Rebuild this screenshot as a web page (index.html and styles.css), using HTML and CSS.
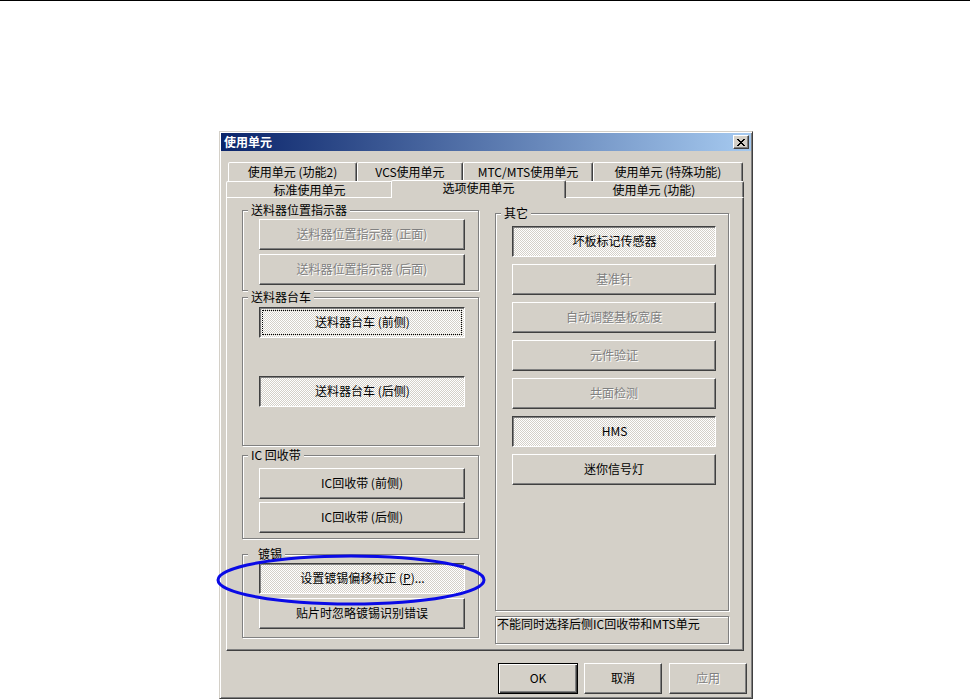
FILE: index.html
```html
<!DOCTYPE html>
<html lang="zh-CN">
<head>
<meta charset="utf-8">
<title>使用单元</title>
<link rel="stylesheet" href="styles.css">
</head>
<body>
<div class="topline"></div>
<div class="dialog">
  <div class="titlebar">
    <span class="title">使用单元</span>
    <span class="close"><svg width="8" height="7" viewBox="0 0 8 7"><path d="M0 0h2v1H0zM6 0h2v1H6zM1 1h2v1H1zM5 1h2v1H5zM2 2h4v1H2zM3 3h2v1H3zM2 4h4v1H2zM1 5h2v1H1zM5 5h2v1H5zM0 6h2v1H0zM6 6h2v1H6z" fill="#000"/></svg></span>
  </div>
  <div class="client">
    <div class="tabrow row1">
      <div class="tab t11">使用单元 (功能2)</div>
      <div class="tab t12">VCS使用单元</div>
      <div class="tab t13">MTC/MTS使用单元</div>
      <div class="tab t14">使用单元 (特殊功能)</div>
    </div>
    <div class="tabrow row2">
      <div class="tab t21">标准使用单元</div>
      <div class="tab t22 sel">选项使用单元</div>
      <div class="tab t23">使用单元 (功能)</div>
    </div>
    <div class="panel">
      <div class="col-left">
        <div class="group g1">
          <span class="legend">送料器位置指示器</span>
          <div class="btn dis">送料器位置指示器 (正面)</div>
          <div class="btn dis">送料器位置指示器 (后面)</div>
        </div>
        <div class="group g2">
          <span class="legend">送料器台车</span>
          <div class="btn on focus">送料器台车 (前侧)</div>
          <div class="btn on">送料器台车 (后侧)</div>
        </div>
        <div class="group g3">
          <span class="legend">IC 回收带</span>
          <div class="btn">IC回收带 (前侧)</div>
          <div class="btn">IC回收带 (后侧)</div>
        </div>
        <div class="group g4">
          <span class="legend wide">镀锡</span>
          <div class="btn on">设置镀锡偏移校正 (<u>P</u>)...</div>
          <div class="btn">贴片时忽略镀锡识别错误</div>
        </div>
      </div>
      <div class="col-right">
        <div class="group gr">
          <span class="legend">其它</span>
          <div class="btn on">坏板标记传感器</div>
          <div class="btn dis">基准针</div>
          <div class="btn dis">自动调整基板宽度</div>
          <div class="btn dis">元件验证</div>
          <div class="btn dis">共面检测</div>
          <div class="btn on">HMS</div>
          <div class="btn">迷你信号灯</div>
        </div>
        <div class="status">不能同时选择后侧IC回收带和MTS单元</div>
      </div>
    </div>
    <div class="footer">
      <div class="btn def">OK</div>
      <div class="btn cancel">取消</div>
      <div class="btn dis">应用</div>
    </div>
  </div>
</div>
<svg class="mark" width="272" height="56" viewBox="0 0 272 56"><ellipse cx="136" cy="28" rx="133" ry="24" fill="none" stroke="#0a0ae6" stroke-width="3"/></svg>
</body>
</html>
```

FILE: styles.css
```css
* { box-sizing: border-box; }
html, body { margin: 0; padding: 0; background: #fff; }
body {
  font-family: "Noto Sans CJK SC", "Noto Sans", sans-serif;
  font-size: 12px;
  color: #000;
  position: relative;
  height: 699px;
  overflow: hidden;
}
.topline { height: 1px; background: #000; }

.dialog {
  margin: 130px 0 0 219px;
  width: 534px;
  height: 568px;
  background: #d4d0c8;
  border: 1px solid;
  border-color: #d4d0c8 #404040 #404040 #d4d0c8;
  box-shadow: inset 1px 1px #fff, inset -1px -1px #808080;
  padding: 1px;
}
.titlebar {
  height: 18px;
  background: linear-gradient(to right, #0a246a, #a6caf0);
  display: flex;
  align-items: center;
  justify-content: space-between;
  padding: 0 2px 0 3px;
}
.title { color: #fff; font-weight: bold; line-height: 18px; }
.close {
  width: 16px;
  height: 14px;
  background: #d4d0c8;
  border: 1px solid;
  border-color: #fff #404040 #404040 #fff;
  box-shadow: inset -1px -1px #808080;
  display: flex;
  align-items: center;
  justify-content: center;
}
.close svg { display: block; shape-rendering: crispEdges; }

.client { padding: 11px 7px 0 5px; }

.tabrow { display: flex; }
.row1 { height: 19px; padding: 0 1px 0 2px; }
.row2 { height: 16px; }
.tab {
  border: 1px solid;
  border-bottom: none;
  border-color: #fff #404040 transparent #fff;
  box-shadow: inset -1px 0 #808080;
  border-radius: 2px 2px 0 0;
  text-align: center;
  white-space: nowrap;
  background: #d4d0c8;
}
.row1 .tab { height: 19px; line-height: 17px; }
.row2 .tab { height: 16px; line-height: 15px; }
.t11 { width: 129px; }
.t12 { width: 106px; }
.t13 { width: 130px; }
.t14 { width: 150px; }
.t21 { width: 167px; }
.t22 { width: 171px; }
.t23 { width: 180px; }
.row2 .tab.sel {
  position: relative;
  z-index: 1;
  height: 18px;
  margin: -1px -2px 0 -2px;
  width: 175px;
  line-height: 14px;
}

.panel {
  width: 518px;
  height: 454px;
  border: 1px solid;
  border-color: #fff #404040 #404040 #fff;
  box-shadow: inset -1px -1px #808080;
  display: flex;
  padding-left: 15px;
}
.col-left { width: 237px; display: flex; flex-direction: column; }
.col-right { width: 234px; margin-left: 16px; display: flex; flex-direction: column; }

.group {
  position: relative;
  border: 1px solid #808080;
  box-shadow: inset 1px 1px #fff, 1px 1px #fff;
  display: flex;
  flex-direction: column;
  align-items: flex-start;
}
.legend {
  position: absolute;
  top: -9px;
  left: 5px;
  padding: 0 3px;
  line-height: 15px;
  background: #d4d0c8;
  white-space: nowrap;
}
.legend.wide { padding-left: 10px; }

.g1 { margin-top: 12px; height: 81px; padding: 8px 0 0 16px; gap: 4px; }
.g2 { margin-top: 6px; height: 149px; padding: 9px 0 0 16px; gap: 38px; }
.g3 { margin-top: 9px; height: 84px; padding: 12px 0 0 16px; gap: 3px; }
.g4 { margin-top: 15px; height: 84px; padding: 8px 0 0 16px; gap: 4px; }
.gr { margin-top: 15px; height: 398px; padding: 12px 0 0 16px; gap: 7px; }
.gr .btn { width: 204px; }

.status {
  margin-top: 5px;
  height: 28px;
  border: 1px solid #808080;
  box-shadow: inset 1px 1px #fff, 1px 1px #fff;
  padding: 0 0 0 1px;
  line-height: 13px;
  white-space: nowrap;
}

.btn {
  width: 206px;
  height: 31px;
  flex: none;
  background: #d4d0c8;
  border: 1px solid;
  border-color: #fff #404040 #404040 #fff;
  box-shadow: inset -1px -1px #808080;
  display: flex;
  align-items: center;
  justify-content: center;
  white-space: nowrap;
  line-height: 14px;
  padding-bottom: 2px;
}
.btn.dis { color: #808080; text-shadow: 1px 1px #fff; }
.btn.on {
  border-color: #404040 #fff #fff #404040;
  box-shadow: inset 1px 1px #808080;
  background: repeating-conic-gradient(#fff 0 25%, #d4d0c8 0 50%) 0 0 / 2px 2px;
  padding: 0 0 2px 1px;
}
.btn.focus { outline: 1px dotted #000; outline-offset: -4px; }

.footer { display: flex; margin-top: 12px; padding-left: 272px; }
.footer .btn { width: 78px; }
.footer .btn.def {
  width: 80px;
  border: 1px solid #000;
  box-shadow: inset 1px 1px #fff, inset -1px -1px #404040, inset -2px -2px #808080;
  margin-right: 6px;
}
.footer .btn.cancel { margin-right: 7px; }

.mark { position: absolute; left: 215px; top: 552px; }
```
